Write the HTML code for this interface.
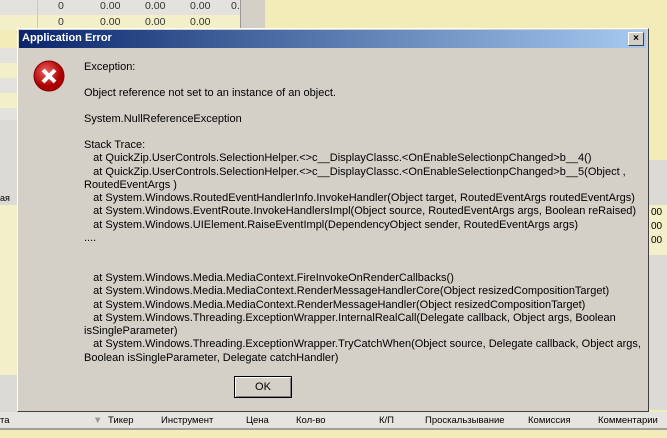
<html><head><style>
body{margin:0;width:667px;height:438px;position:relative;overflow:hidden;background:#f1ecb8;font-family:"Liberation Sans",sans-serif;}
.t{position:absolute;font-size:11px;color:#000;white-space:nowrap}
</style></head><body>
<div style="position:absolute;left:0;top:0;width:240px;height:30px;background:#e4e2dc"></div>
<div style="position:absolute;left:0;top:15px;width:240px;height:15px;background:#f3efc8"></div>
<div style="position:absolute;left:37px;top:0;width:1px;height:30px;background:#c8c8c8"></div>
<div class="t" style="left:58px;top:0;color:#333;font-size:10.5px">0</div>
<div class="t" style="left:100px;top:0;color:#333;font-size:10.5px">0.00</div>
<div class="t" style="left:145px;top:0;color:#333;font-size:10.5px">0.00</div>
<div class="t" style="left:190px;top:0;color:#333;font-size:10.5px">0.00</div>
<div class="t" style="left:231px;top:0;color:#333;font-size:10.5px">0.</div>
<div class="t" style="left:58px;top:16px;color:#333;font-size:10.5px">0</div>
<div class="t" style="left:100px;top:16px;color:#333;font-size:10.5px">0.00</div>
<div class="t" style="left:145px;top:16px;color:#333;font-size:10.5px">0.00</div>
<div class="t" style="left:190px;top:16px;color:#333;font-size:10.5px">0.00</div>
<div style="position:absolute;left:240px;top:0;width:24px;height:30px;background:#d4d0c8;border-left:1px solid #999"></div>
<div style="position:absolute;left:0;top:48px;width:20px;height:72px;background:repeating-linear-gradient(#e4e2dc 0 15px,#f3efc8 15px 30px)"></div>
<div style="position:absolute;left:0;top:120px;width:20px;height:300px;background:#dcdad4"></div>
<div style="position:absolute;left:0;top:205px;width:20px;height:170px;background:#f3efc8"></div>
<div class="t" style="left:0;top:193px;font-size:9px">ая</div>
<div style="position:absolute;left:649px;top:160px;width:18px;height:250px;background:#dcdad4"></div>
<div style="position:absolute;left:649px;top:205px;width:18px;height:50px;background:#f3efc8"></div>
<div class="t" style="left:651px;top:207px;font-size:10px">00</div>
<div class="t" style="left:651px;top:221px;font-size:10px">00</div>
<div class="t" style="left:651px;top:235px;font-size:10px">00</div>
<div style="position:absolute;left:0;top:412px;width:667px;height:16px;background:#e6e4de;border-bottom:2px solid #a0a098"></div>
<div class="t" style="left:0;top:415px;font-size:9.5px">та</div>
<div class="t" style="left:93px;top:415px;font-size:9.5px;color:#999">▼</div>
<div class="t" style="left:108px;top:415px;font-size:9.5px">Тикер</div>
<div class="t" style="left:161px;top:415px;font-size:9.5px">Инструмент</div>
<div class="t" style="left:246px;top:415px;font-size:9.5px">Цена</div>
<div class="t" style="left:296px;top:415px;font-size:9.5px">Кол-во</div>
<div class="t" style="left:379px;top:415px;font-size:9.5px">К/П</div>
<div class="t" style="left:425px;top:415px;font-size:9.5px">Проскальзывание</div>
<div class="t" style="left:528px;top:415px;font-size:9.5px">Комиссия</div>
<div class="t" style="left:598px;top:415px;font-size:9.5px">Комментарии</div>

<div style="position:absolute;left:17px;top:28px;width:630px;height:382px;background:#d4d0c8;border:1px solid;border-color:#fff #404040 #404040 #fff"></div>
<div style="position:absolute;left:19px;top:30px;width:627px;height:18px;background:linear-gradient(to right,#0a246a,#3a5a95 30%,#a6caf0)"></div>
<div class="t" style="left:22px;top:32px;color:#fff;font-weight:bold;font-size:11px">Application Error</div>
<div style="position:absolute;left:628px;top:32px;width:14px;height:12px;background:#d4d0c8;border:1px solid;border-color:#fff #404040 #404040 #fff;font-size:10px;line-height:12px;text-align:center;font-weight:bold">×</div>
<svg style="position:absolute;left:32px;top:59px" width="34" height="34"><defs><radialGradient id="g" cx="40%" cy="35%"><stop offset="0" stop-color="#f06060"/><stop offset="1" stop-color="#a00"/></radialGradient></defs><circle cx="17" cy="17" r="15" fill="url(#g)" stroke="#800" stroke-width="1"/><path d="M11 11L23 23M23 11L11 23" stroke="#fff" stroke-width="4"/></svg>
<div class="t" style="left:84px;top:61px">Exception:</div>
<div class="t" style="left:84px;top:87px">Object reference not set to an instance of an object.</div>
<div class="t" style="left:84px;top:113px">System.NullReferenceException</div>
<div class="t" style="left:84px;top:139px;line-height:13.3px">Stack Trace:<br>&nbsp;&nbsp; at QuickZip.UserControls.SelectionHelper.&lt;&gt;c__DisplayClassc.&lt;OnEnableSelectionpChanged&gt;b__4()<br>&nbsp;&nbsp; at QuickZip.UserControls.SelectionHelper.&lt;&gt;c__DisplayClassc.&lt;OnEnableSelectionpChanged&gt;b__5(Object ,<br>RoutedEventArgs )<br>&nbsp;&nbsp; at System.Windows.RoutedEventHandlerInfo.InvokeHandler(Object target, RoutedEventArgs routedEventArgs)<br>&nbsp;&nbsp; at System.Windows.EventRoute.InvokeHandlersImpl(Object source, RoutedEventArgs args, Boolean reRaised)<br>&nbsp;&nbsp; at System.Windows.UIElement.RaiseEventImpl(DependencyObject sender, RoutedEventArgs args)<br>....<br><br><br>&nbsp;&nbsp; at System.Windows.Media.MediaContext.FireInvokeOnRenderCallbacks()<br>&nbsp;&nbsp; at System.Windows.Media.MediaContext.RenderMessageHandlerCore(Object resizedCompositionTarget)<br>&nbsp;&nbsp; at System.Windows.Media.MediaContext.RenderMessageHandler(Object resizedCompositionTarget)<br>&nbsp;&nbsp; at System.Windows.Threading.ExceptionWrapper.InternalRealCall(Delegate callback, Object args, Boolean<br>isSingleParameter)<br>&nbsp;&nbsp; at System.Windows.Threading.ExceptionWrapper.TryCatchWhen(Object source, Delegate callback, Object args,<br>Boolean isSingleParameter, Delegate catchHandler)</div>
<div style="position:absolute;left:234px;top:376px;width:56px;height:20px;border:1px solid #000;background:#d4d0c8;box-shadow:inset 1px 1px #fff,inset -1px -1px #808080;font-size:11px;line-height:20px;text-align:center">OK</div>
</body></html>
